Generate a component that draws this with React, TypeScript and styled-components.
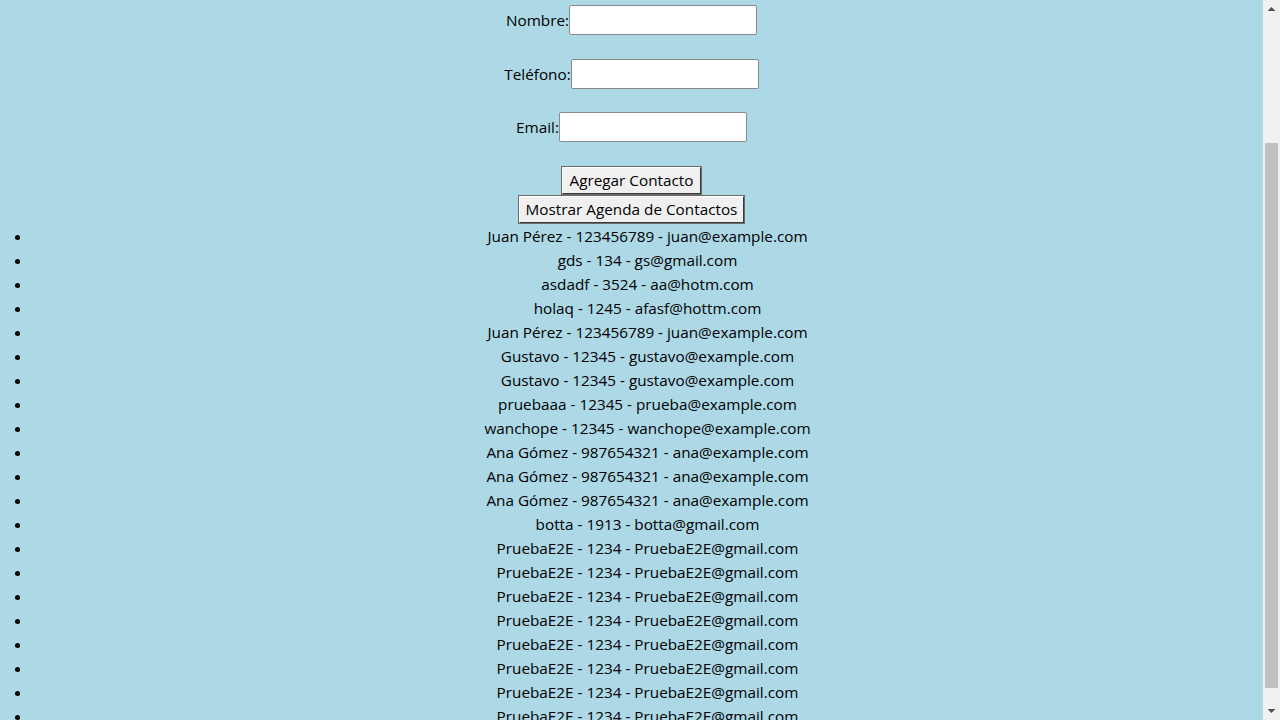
import React, { useLayoutEffect } from "react";
import styled, { createGlobalStyle } from "styled-components";

const GlobalStyle = createGlobalStyle`
  html { background: #add8e6; }
  body {
    margin: 0 17px 0 0;
    background: #add8e6;
    font-family: "Open Sans", "Noto Sans", sans-serif;
    font-size: 15.3px;
    color: #000;
  }
`;

const Page = styled.div`
  text-align: center;
`;

const Title = styled.h1`
  margin: 0;
  height: 170px;
  display: flex;
  align-items: center;
  justify-content: center;
  font-size: 32px;
  font-weight: bold;
`;

const Form = styled.form`
  display: flex;
  flex-direction: column;
  align-items: center;
`;

const FieldRow = styled.div`
  display: flex;
  align-items: center;
  justify-content: center;
  height: 30px;
  margin-bottom: 23.5px;
`;

const Label = styled.label`
  font-size: 15.3px;
`;

const Input = styled.input`
  box-sizing: border-box;
  width: 188px;
  height: 30px;
  border: 1px solid #8a8a8a;
  border-radius: 2px;
  background: #fff;
  padding: 4px 6px;
  font: inherit;
`;

const Button = styled.button`
  box-sizing: border-box;
  font-family: inherit;
  font-size: 15.3px;
  line-height: 21px;
  height: 29px;
  background: #f0f0f0;
  color: #000;
  border: 2px solid;
  border-color: #fff #3a3a3a #3a3a3a #fff;
  outline: 1px solid #6b6b6b;
  outline-offset: -1px;
  padding: 0 6px;
  border-radius: 0;
  cursor: pointer;
`;

const Buttons = styled.div`
  display: flex;
  flex-direction: column;
  align-items: center;
`;

const List = styled.ul`
  margin: 0 0 16px;
  padding-left: 32px;
  text-align: center;
`;

const Item = styled.li`
  line-height: 24px;
`;

const ScrollTrack = styled.div`
  position: fixed;
  top: 0;
  right: 0;
  width: 17px;
  height: 100vh;
  background: #f1f1f1;
`;

const ScrollThumb = styled.div`
  position: absolute;
  left: 2px;
  right: 2px;
  top: 143px;
  height: 545px;
  background: #c1c1c1;
`;

const Arrow = styled.svg<{ $bottom?: boolean }>`
  position: absolute;
  left: 0;
  width: 17px;
  height: 17px;
  ${(p) => (p.$bottom ? "bottom: 0;" : "top: 0;")}
`;

const contacts = [
  "Juan Pérez - 123456789 - juan@example.com",
  "gds - 134 - gs@gmail.com",
  "asdadf - 3524 - aa@hotm.com",
  "holaq - 1245 - afasf@hottm.com",
  "Juan Pérez - 123456789 - juan@example.com",
  "Gustavo - 12345 - gustavo@example.com",
  "Gustavo - 12345 - gustavo@example.com",
  "pruebaaa - 12345 - prueba@example.com",
  "wanchope - 12345 - wanchope@example.com",
  "Ana Gómez - 987654321 - ana@example.com",
  "Ana Gómez - 987654321 - ana@example.com",
  "Ana Gómez - 987654321 - ana@example.com",
  "botta - 1913 - botta@gmail.com",
  "PruebaE2E - 1234 - PruebaE2E@gmail.com",
  "PruebaE2E - 1234 - PruebaE2E@gmail.com",
  "PruebaE2E - 1234 - PruebaE2E@gmail.com",
  "PruebaE2E - 1234 - PruebaE2E@gmail.com",
  "PruebaE2E - 1234 - PruebaE2E@gmail.com",
  "PruebaE2E - 1234 - PruebaE2E@gmail.com",
  "PruebaE2E - 1234 - PruebaE2E@gmail.com",
  "PruebaE2E - 1234 - PruebaE2E@gmail.com",
];

export default function App() {
  useLayoutEffect(() => {
    window.scrollTo(0, 165);
  }, []);
  return (
    <>
      <GlobalStyle />
      <Page>
        <Title>Agenda de Contactos</Title>
        <Form onSubmit={(e) => e.preventDefault()}>
          <FieldRow>
            <Label htmlFor="nombre">Nombre:</Label>
            <Input id="nombre" type="text" />
          </FieldRow>
          <FieldRow>
            <Label htmlFor="telefono">Teléfono:</Label>
            <Input id="telefono" type="text" />
          </FieldRow>
          <FieldRow>
            <Label htmlFor="email">Email:</Label>
            <Input id="email" type="email" />
          </FieldRow>
        </Form>
        <Buttons>
          <Button type="button">Agregar Contacto</Button>
          <Button type="button">Mostrar Agenda de Contactos</Button>
        </Buttons>
        <List>
          {contacts.map((c, i) => (
            <Item key={i}>{c}</Item>
          ))}
        </List>
      </Page>
      <ScrollTrack aria-hidden="true">
        <Arrow viewBox="0 0 17 17">
          <path d="M4.5 11 L8.5 7 L12.5 11 Z" fill="#505050" />
        </Arrow>
        <ScrollThumb />
        <Arrow $bottom viewBox="0 0 17 17">
          <path d="M4.5 6 L8.5 10 L12.5 6 Z" fill="#505050" />
        </Arrow>
      </ScrollTrack>
    </>
  );
}
